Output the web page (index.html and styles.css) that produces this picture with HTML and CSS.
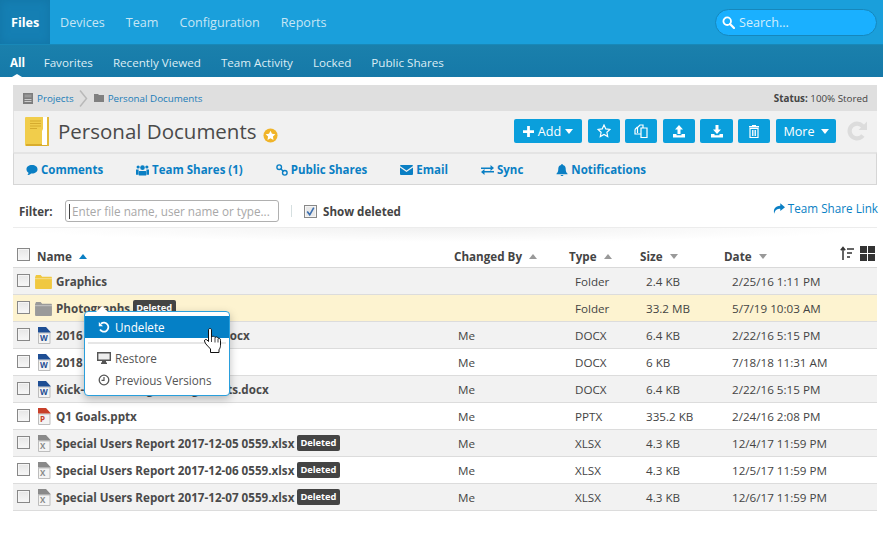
FILE: index.html
```html
<!DOCTYPE html>
<html lang="en">
<head>
<meta charset="utf-8">
<title>Personal Documents</title>
<link rel="stylesheet" href="styles.css">
</head>
<body>
<svg class="defs" width="0" height="0" aria-hidden="true">
  <defs>
    <symbol id="folder" viewBox="0 0 18 16"><path d="M0 3.500 1 1h5l1.500 2H17.500l.5 1v11l-.5 1H.5L0 15z" fill="currentColor"/><path d="M0 5h18" stroke="#fff" stroke-opacity=".45" stroke-width="1"/></symbol>
    <symbol id="doc" viewBox="0 0 14 17"><path d="M1.500 6h11.500v10.500H1.500z" fill="#f4f4f4" stroke="#bdbdbd"/><path d="M1 0h8l5 5.500H1z" fill="currentColor"/></symbol>
    <symbol id="down" viewBox="0 0 8 5"><path d="M0 0h8L4 5z" fill="currentColor"/></symbol>
    <symbol id="up" viewBox="0 0 8 5"><path d="M0 5h8L4 0z" fill="currentColor"/></symbol>
  </defs>
</svg>

<header class="topnav">
  <nav class="topnav-links">
    <a class="topnav-link active">Files</a>
    <a class="topnav-link">Devices</a>
    <a class="topnav-link">Team</a>
    <a class="topnav-link">Configuration</a>
    <a class="topnav-link">Reports</a>
  </nav>
  <div class="search">
    <svg class="search-icon" viewBox="0 0 13 13"><circle cx="5.200" cy="5.200" r="3.800" fill="none" stroke="#fff" stroke-width="1.800"/><path d="m8 8 4 4" stroke="#fff" stroke-width="2.200" stroke-linecap="round"/></svg>
    <span>Search...</span>
  </div>
</header>

<nav class="subnav">
  <a class="subnav-link active">All</a>
  <a class="subnav-link">Favorites</a>
  <a class="subnav-link">Recently Viewed</a>
  <a class="subnav-link">Team Activity</a>
  <a class="subnav-link">Locked</a>
  <a class="subnav-link">Public Shares</a>
</nav>

<main class="content">
  <section class="panel">
    <div class="crumbs">
      <svg class="crumb-icon" viewBox="0 0 10 11"><path d="M0 0h10v11H0z" fill="#7d7d7d"/><path d="M1.500 1.500h7v3h-7z" fill="#999"/><path d="M1.500 6h7v1h-7zM1.500 8h7v1h-7z" fill="#ccc"/></svg>
      <a class="crumb">Projects</a>
      <svg class="crumb-sep" viewBox="0 0 9 17"><path d="m1 .5 6.500 8L1 16.500" fill="none" stroke="#b9b9b9" stroke-width="1.500"/></svg>
      <svg class="crumb-folder" viewBox="0 0 10 8"><path d="M0 0h4l1 1h5v7H0z" fill="#808080"/></svg>
      <a class="crumb">Personal Documents</a>
      <span class="status"><b>Status:</b> 100% Stored</span>
    </div>

    <div class="titlebar">
      <svg class="title-icon" viewBox="0 0 24 29"><path d="M1 0h23v29H1a1 1 0 0 1-1-1V1a1 1 0 0 1 1-1z" fill="#f1cd4b"/><path d="M1 27h23v2H1z" fill="#d9ac2c"/><path d="M18 0h4v28h-5V14l1-2z" fill="#fff"/><path d="M22 0h2v29h-2z" fill="#e2b93a"/><path d="M5 4h11M5 6.500h11M5 9h11M5 11.500h7" stroke="#d5ab2e" stroke-width="1"/></svg>
      <h1 class="title">Personal Documents</h1>
      <svg class="title-star" viewBox="0 0 16 16"><circle cx="8" cy="8" r="7.500" fill="#f0b429"/><path d="m8 2.800 1.600 3.300 3.600.5-2.600 2.500.6 3.600L8 11l-3.200 1.700.6-3.600-2.600-2.500 3.600-.5z" fill="#fff"/></svg>
      <div class="actions">
        <a class="btn wide-add">
          <svg class="btn-plus" viewBox="0 0 12 12"><path d="M4.500 0h3v4.500H12v3H7.500V12h-3V7.500H0v-3h4.500z" fill="#fff"/></svg>
          Add
          <svg class="btn-caret"><use href="#down"/></svg>
        </a>
        <a class="btn square">
          <svg class="btn-icon" viewBox="0 0 14 14"><path d="m7 1 1.800 3.900 4.200.5-3.100 2.900.8 4.200L7 10.400l-3.700 2.100.8-4.200L1 5.400l4.200-.5z" fill="none" stroke="#fff" stroke-width="1.200"/></svg>
        </a>
        <a class="btn square wider-gap">
          <svg class="btn-icon" viewBox="0 0 14 14"><path d="M3.500 9V3.500L6 1h3v3" fill="none" stroke="#fff" stroke-width="1.200"/><path d="M1 5.500 3.500 3M7 4h6v9.500H7zM1 5.500V10h6" fill="none" stroke="#fff" stroke-width="1.200"/></svg>
        </a>
        <a class="btn square">
          <svg class="btn-icon" viewBox="0 0 14 14"><path d="M7 1 11 5.500H8.500V10h-3V5.500H3z" fill="#fff"/><path d="M1 10h3.500v1.200h5V10H13v3.500H1z" fill="#fff"/></svg>
        </a>
        <a class="btn square-lg">
          <svg class="btn-icon" viewBox="0 0 14 14"><path d="M5.500 1h3v4.500H11L7 10 3 5.500h2.500z" fill="#fff"/><path d="M1 10h3.500v1.200h5V10H13v3.500H1z" fill="#fff"/></svg>
        </a>
        <a class="btn square wider-gap">
          <svg class="btn-icon" viewBox="0 0 14 14"><path d="M5 1h4v1h3v1.500H2V2h3z" fill="#fff"/><path d="M3 4.500h8V13.500H3z" fill="none" stroke="#fff" stroke-width="1.200"/><path d="M5.500 6v6M7 6v6M8.500 6v6" stroke="#fff" stroke-width=".9"/></svg>
        </a>
        <a class="btn more">
          More
          <svg class="btn-caret"><use href="#down"/></svg>
        </a>
        <svg class="refresh" viewBox="0 0 22 22"><path d="M11 1.500a9.500 9.500 0 1 0 7.500 15.300l-3.300-2.500A5.300 5.300 0 1 1 15 7.500l-2.500 2.500H21V1.500l-3 3A9.500 9.500 0 0 0 11 1.500z" fill="#dcdcdc"/></svg>
      </div>
    </div>

    <div class="tabs">
      <a class="tab"><svg class="tab-icon" viewBox="0 0 13 12"><path d="M6.500 0.500c3.500 0 6 2 6 4.700s-2.500 4.700-6 4.700l-1-.1C4.300 11 2.800 11.500 1.500 11.500c.8-.8 1.200-1.600 1.200-2.500C1.300 8.200.5 6.800.5 5.200.5 2.500 3 .5 6.500.5z" fill="currentColor"/></svg>Comments</a>
      <a class="tab"><svg class="tab-icon team-icon" viewBox="0 0 14 12"><circle cx="7" cy="3.500" r="2.500" fill="currentColor"/><circle cx="2.300" cy="2.800" r="1.700" fill="currentColor"/><circle cx="11.700" cy="2.800" r="1.700" fill="currentColor"/><path d="M3.500 7h7l.5 1v4H3V8z" fill="currentColor"/><path d="M0 5.500h2.800V11H0zM11.200 5.500H14V11h-2.800z" fill="currentColor"/></svg>Team Shares (1)</a>
      <a class="tab"><svg class="tab-icon" viewBox="0 0 12 12"><circle cx="3.200" cy="3.200" r="2.300" fill="none" stroke="currentColor" stroke-width="1.400"/><circle cx="8.800" cy="8.800" r="2.300" fill="none" stroke="currentColor" stroke-width="1.400"/><path d="m4.500 4.500 3 3" stroke="currentColor" stroke-width="1.400"/></svg>Public Shares</a>
      <a class="tab"><svg class="tab-icon email-icon" viewBox="0 0 13 10"><path d="M1 0h11a1 1 0 0 1 1 1L6.500 5.500 0 1a1 1 0 0 1 1-1zM0 2.600l6.500 4.500L13 2.600V9a1 1 0 0 1-1 1H1a1 1 0 0 1-1-1z" fill="currentColor"/></svg>Email</a>
      <a class="tab"><svg class="tab-icon email-icon" viewBox="0 0 13 10"><path d="M0 2.400h9.500V0L13 3l-3.500 3V3.900H0zM13 6.100H3.500V4L0 7l3.500 3V7.600H13z" fill="currentColor"/></svg>Sync</a>
      <a class="tab"><svg class="tab-icon" viewBox="0 0 12 13"><path d="M6 0c.6 0 1 .4 1 1 2 .4 3 2 3 4 0 3 .6 4.500 2 5.500V11H0v-.5C1.400 9.500 2 8 2 5c0-2 1-3.600 3-4 0-.6.400-1 1-1zM4.500 11.800h3C7.500 12.600 6.800 13 6 13s-1.500-.4-1.500-1.200z" fill="currentColor"/></svg>Notifications</a>
    </div>
  </section>

  <section class="filterbar">
    <span class="filter-label">Filter:</span>
    <div class="filter-input"><span class="caret-line"></span>Enter file name, user name or type...</div>
    <span class="divider"></span>
    <span class="checkbox checked"><svg viewBox="0 0 10 10"><path d="m2 5 2.300 3L8 1.500" fill="none" stroke="#3c6fb0" stroke-width="1.500"/></svg></span>
    <span class="show-deleted">Show deleted</span>
    <a class="share-link"><svg class="share-icon" viewBox="0 0 14 12"><path d="M8.500 0 14 4.500 8.500 9V6.300C5 6.300 2.500 7.300 1.500 12 0 7 2.500 2.800 8.500 2.700z" fill="currentColor"/></svg>Team Share Link</a>
  </section>
  <div class="fade"></div>

  <section class="list">
    <div class="list-head">
      <span class="checkbox"></span>
      <span class="h-name">Name <svg class="sort blue"><use href="#up"/></svg></span>
      <span class="h-by">Changed By <svg class="sort"><use href="#up"/></svg></span>
      <span class="h-type">Type <svg class="sort"><use href="#up"/></svg></span>
      <span class="h-size">Size <svg class="sort"><use href="#down"/></svg></span>
      <span class="h-date">Date <svg class="sort"><use href="#down"/></svg></span>
      <span class="view-tools">
        <svg class="sort-tool" viewBox="0 0 14 14"><path d="M3 14V2M.8 4.200 3 1.500l2.200 2.700" fill="none" stroke="#333" stroke-width="1.500"/><path d="M7 3h7M7 7h5M7 11h3" stroke="#333" stroke-width="1.600"/></svg>
        <svg class="grid-tool" viewBox="0 0 15 15"><path d="M0 0h7v7H0zM8 0h7v7H8zM0 8h7v7H0zM8 8h7v7H8z" fill="#333"/></svg>
      </span>
    </div>

    <div class="row odd">
      <span class="checkbox"></span><svg class="file-icon folder-y"><use href="#folder"/></svg>
      <span class="name">Graphics</span><span class="by"></span><span class="type">Folder</span><span class="size">2.4 KB</span><span class="date">2/25/16 1:11 PM</span>
    </div>
    <div class="row selected">
      <span class="checkbox"></span><svg class="file-icon folder-g"><use href="#folder"/></svg>
      <span class="name">Photographs<em class="badge">Deleted</em></span><span class="by"></span><span class="type">Folder</span><span class="size">33.2 MB</span><span class="date">5/7/19 10:03 AM</span>
    </div>
    <div class="row odd">
      <span class="checkbox"></span><span class="doc-wrap word"><svg class="doc-icon"><use href="#doc"/></svg><i>W</i></span>
      <span class="name">2016 Marketing Plan Review.docx</span><span class="by">Me</span><span class="type">DOCX</span><span class="size">6.4 KB</span><span class="date">2/22/16 5:15 PM</span>
    </div>
    <div class="row">
      <span class="checkbox"></span><span class="doc-wrap word"><svg class="doc-icon"><use href="#doc"/></svg><i>W</i></span>
      <span class="name">2018 Marketing Plan.docx</span><span class="by">Me</span><span class="type">DOCX</span><span class="size">6 KB</span><span class="date">7/18/18 11:31 AM</span>
    </div>
    <div class="row odd">
      <span class="checkbox"></span><span class="doc-wrap word"><svg class="doc-icon"><use href="#doc"/></svg><i>W</i></span>
      <span class="name">Kick-Off Meeting Talking Points.docx</span><span class="by">Me</span><span class="type">DOCX</span><span class="size">6.4 KB</span><span class="date">2/22/16 5:15 PM</span>
    </div>
    <div class="row">
      <span class="checkbox"></span><span class="doc-wrap ppt"><svg class="doc-icon"><use href="#doc"/></svg><i>P</i></span>
      <span class="name">Q1 Goals.pptx</span><span class="by">Me</span><span class="type">PPTX</span><span class="size">335.2 KB</span><span class="date">2/24/16 2:08 PM</span>
    </div>
    <div class="row odd">
      <span class="checkbox"></span><span class="doc-wrap xls"><svg class="doc-icon"><use href="#doc"/></svg><i>X</i></span>
      <span class="name">Special Users Report 2017-12-05 0559.xlsx<em class="badge">Deleted</em></span><span class="by">Me</span><span class="type">XLSX</span><span class="size">4.3 KB</span><span class="date">12/4/17 11:59 PM</span>
    </div>
    <div class="row">
      <span class="checkbox"></span><span class="doc-wrap xls"><svg class="doc-icon"><use href="#doc"/></svg><i>X</i></span>
      <span class="name">Special Users Report 2017-12-06 0559.xlsx<em class="badge">Deleted</em></span><span class="by">Me</span><span class="type">XLSX</span><span class="size">4.3 KB</span><span class="date">12/5/17 11:59 PM</span>
    </div>
    <div class="row odd">
      <span class="checkbox"></span><span class="doc-wrap xls"><svg class="doc-icon"><use href="#doc"/></svg><i>X</i></span>
      <span class="name">Special Users Report 2017-12-07 0559.xlsx<em class="badge">Deleted</em></span><span class="by">Me</span><span class="type">XLSX</span><span class="size">4.3 KB</span><span class="date">12/6/17 11:59 PM</span>
    </div>

    <div class="menu">
      <span class="menu-arrow"></span>
      <a class="menu-item hot">
        <svg class="menu-icon" viewBox="0 0 12 12"><path d="M3 2.700A4.500 4.500 0 1 1 2 8.500" fill="none" stroke="#fff" stroke-width="1.800"/><path d="M.8 1v4.200H5z" fill="#fff"/></svg>
        Undelete
      </a>
      <div class="menu-sep"></div>
      <a class="menu-item">
        <svg class="menu-icon monitor" viewBox="0 0 14 12"><path d="M.7.700h12.600v7.600H.7z" fill="#eee" stroke="#555" stroke-width="1.400"/><path d="M5 9h4v1.500h1V12H4v-1.500h1z" fill="#555"/></svg>
        Restore
      </a>
      <a class="menu-item">
        <svg class="menu-icon" viewBox="0 0 12 12"><circle cx="6" cy="6" r="4.800" fill="none" stroke="#555" stroke-width="1.300"/><path d="M6 3v3.300H3.500" fill="none" stroke="#555" stroke-width="1.200"/></svg>
        Previous Versions
      </a>
    </div>
    <svg class="hand" viewBox="0 0 17 25"><path d="M4.500 2c0-2 3-2 3 0v7c1-1 3-1 3.500.5 1-1 2.800-.7 3 .8 1.300-.5 2.500.3 2.500 2v5c0 2-.6 3-1.500 4.500v2.700H6.500V21C4 18 1 16 .5 13c-.2-1.500 1.500-2 2.500-1l1.500 1.500z" fill="#fff" stroke="#111" stroke-width="1"/><path d="M7.500 9v5M11 10v4.500M14 11v3.500" stroke="#111" stroke-width=".8"/></svg>
  </section>
</main>
</body>
</html>
```

FILE: styles.css
```css
* { box-sizing: border-box; }
html, body { margin: 0; padding: 0; }
body {
  width: 883px;
  height: 537px;
  overflow: hidden;
  background: #fff;
  font-family: "Open Sans", "Liberation Sans", sans-serif;
  font-size: 11.650px;
  color: #444;
  position: relative;
}
a { text-decoration: none; cursor: default; }
.defs { position: absolute; }

.topnav {
  height: 45px;
  background: #1a9fdb;
  display: flex;
  align-items: flex-start;
  justify-content: space-between;
  border-bottom: 1px solid #1888b8;
}
.topnav-links { display: flex; }
.topnav-link {
  height: 44px;
  line-height: 46px;
  font-size: 12.600px;
  color: #c7e6f5;
  padding: 0 10.500px;
}
.topnav-link.active {
  width: 49.500px;
  padding: 0 0 0 11px;
  font-weight: 700;
  color: #fff;
  background: #157fb3;
  box-shadow: inset 0 0 10px #1275a6;
}
.search {
  width: 162px;
  height: 27px;
  margin: 9px 6px 0 0;
  border: 1px solid #1687bc;
  border-radius: 14px;
  background: #1ab0ff;
  color: #d4eefc;
  font-size: 12.600px;
  display: flex;
  align-items: center;
  padding-left: 6px;
  gap: 4px;
}
.search-icon { width: 13px; height: 13px; flex: none; }

.subnav {
  height: 32px;
  background: linear-gradient(#1a80ac, #1679a8);
  display: flex;
  align-items: center;
  padding: 2px 0 0 10px;
  gap: 20px;
}
.subnav-link { color: #dcedf5; font-size: 11.650px; }
.subnav-link.active { color: #fff; font-weight: 700; position: relative; margin-right: -1.500px; }
.subnav-link.active::after {
  content: "";
  position: absolute;
  left: 2px;
  bottom: -7px;
  border: 5px solid transparent;
  border-top: 0;
  border-bottom: 3px solid #fff;
}

.content { padding: 8px 6px 0 13px; position: relative; }

.panel { width: 864px; }
.crumbs {
  height: 26px;
  background: #dfdfdf;
  display: flex;
  align-items: center;
  padding: 0 9px 0 10px;
  font-size: 9.800px;
}
.crumb { color: #1b7cb8; }
.crumb-icon { width: 10px; height: 11px; margin-right: 4px; }
.crumb-sep { width: 9px; height: 17px; margin: 0 6px 0 5px; }
.crumb-folder { width: 10px; height: 8px; margin-right: 4px; }
.status { margin-left: auto; color: #444; font-size: 9.800px; }
.status b { font-weight: 700; }

.titlebar {
  height: 41px;
  background: #f1f1f1;
  display: flex;
  align-items: center;
  padding-left: 11px;
  border-left: 1px solid #e2e2e2;
}
.title-icon { width: 24px; height: 29px; flex: none; }
.title {
  margin: 0 0 0 9px;
  font-size: 20.500px;
  font-weight: 400;
  color: #4a4a4a;
  line-height: 41px;
}
.title-star { width: 15px; height: 15px; margin: 7px 0 0 6px; flex: none; }
.actions { margin-left: auto; display: flex; align-items: center; gap: 5px; padding: 0 9px 1px 0; }
.btn {
  height: 24px;
  background: #0a9fdc;
  border-radius: 2px;
  color: #fff;
  font-size: 12.600px;
  display: flex;
  align-items: center;
  justify-content: center;
}
.wide-add { width: 68px; margin-right: 1px; gap: 4px; }
.square { width: 32px; }
.square-lg { width: 33px; }
.wider-gap { margin-right: 1px; }
.more { width: 60px; gap: 6px; }
.btn-plus { width: 11px; height: 11px; }
.btn-caret { width: 8px; height: 5px; color: #fff; }
.btn-icon { width: 14px; height: 14px; }
.refresh { width: 22px; height: 22px; margin-left: 5px; }

.tabs {
  height: 33px;
  background: #f1f1f1;
  border: 1px solid #d6d6d6;
  border-top: 2px solid #e4e4e4;
  display: flex;
  align-items: center;
  padding: 1px 0 0 12px;
  gap: 33px;
  font-weight: 700;
  font-size: 11.500px;
}
.tab { color: #0a7fc4; display: flex; align-items: center; gap: 3px; }
.tab-icon { width: 12px; height: 12px; flex: none; }
.team-icon { width: 13px; }
.email-icon { width: 13px; height: 10px; }

.filterbar {
  width: 864px;
  height: 43px;
  display: flex;
  align-items: center;
  padding: 10px 0 0 6px;
  border-bottom: 1px solid #ececec;
}
.filter-label { font-weight: 700; color: #444; font-size: 11.500px; width: 46px; }
.filter-input {
  width: 214px;
  height: 22px;
  border: 1px solid #b0b0b0;
  border-radius: 3px;
  font-size: 11.700px;
  color: #a8a8a8;
  display: flex;
  align-items: center;
  padding-left: 3px;
  white-space: nowrap;
  overflow: hidden;
}
.caret-line { width: 1px; height: 15px; background: #444; margin-right: 2px; flex: none; }
.divider { width: 1px; height: 12px; background: #d5dfe0; margin: 0 12px 0 12px; }
.show-deleted { font-weight: 700; margin-left: 6px; color: #444; font-size: 11.600px; }
.share-link { margin-left: auto; color: #0a7fc4; font-size: 11.700px; display: flex; align-items: center; gap: 3px; padding: 0 0 6px; margin-right: -1px; }
.share-icon { width: 12px; height: 11px; }

.fade {
  width: 864px;
  height: 14px;
  background: radial-gradient(ellipse 50% 100% at 50% 0, #f1f1f1, #fff);
}

.checkbox {
  width: 13px;
  height: 13px;
  border: 1px solid #888;
  background: linear-gradient(#e6e6e6, #f7f7f7);
  box-shadow: inset 0 0 0 1px #f5f5f5;
  flex: none;
  display: block;
}
.checkbox.checked { background: #e8e8e8; }
.checkbox.checked svg { display: block; width: 11px; height: 11px; }

.list { width: 864px; position: relative; }
.list-head {
  height: 26px;
  display: grid;
  grid-template-columns: 20px 417px 115px 71px 84px 1fr auto;
  align-items: center;
  padding: 3px 2px 0 4px;
  border-bottom: 1px solid #d9d9d9;
  font-weight: 700;
  color: #444;
}
.list-head .checkbox { margin-top: -3px; }
.sort { width: 8px; height: 5px; color: #999; margin: 0 0 2px 4px; }
.sort.blue { color: #0a7fc4; }
.view-tools { display: flex; gap: 6px; align-items: center; margin-top: -6px; }
.sort-tool { width: 14px; height: 14px; }
.grid-tool { width: 15px; height: 15px; }

.row {
  height: 27px;
  display: grid;
  grid-template-columns: 18px 21px 402px 117px 71px 86px 1fr;
  align-items: center;
  padding: 0 0 0 4px;
  border-bottom: 1px solid #dcdcdc;
  background: #fff;
}
.row.odd { background: #f2f2f2; }
.row.selected { background: #fdf3d0; }
.row > .checkbox { margin-bottom: 1px; }
.name { font-weight: 700; color: #4a4a4a; display: flex; align-items: center; white-space: nowrap; }
.badge {
  font-style: normal;
  font-size: 9.300px;
  font-weight: 700;
  color: #fff;
  background: #444;
  border-radius: 2px;
  padding: 0 3.500px;
  height: 16px;
  line-height: 16px;
  margin-left: 2.500px;
}
.file-icon { width: 17px; height: 15px; }
.folder-y { color: #f0c840; }
.folder-g { color: #9a9a9a; }
.doc-wrap { position: relative; width: 14px; height: 17px; display: block; margin-left: 2px; }
.doc-icon { width: 14px; height: 17px; display: block; }
.doc-wrap i {
  position: absolute;
  left: 3px;
  top: 6px;
  font-style: normal;
  font-weight: 700;
  font-size: 8px;
  line-height: 10px;
}
.word { color: #1e4e94; }
.ppt { color: #c8402a; }
.xls { color: #8a8a8a; }

.menu {
  position: absolute;
  left: 71px;
  top: 69px;
  width: 146px;
  height: 85px;
  background: #fff;
  border: 1px solid #2a9fdc;
  border-radius: 4px;
  box-shadow: 0 3px 8px rgba(0, 0, 0, .25);
  padding-top: 4px;
  font-size: 11.700px;
  color: #555;
}
.menu-arrow {
  position: absolute;
  left: 11px;
  top: -6px;
  border: 6px solid transparent;
  border-top: 0;
  border-bottom: 6px solid #fff;
}
.menu-item { height: 22px; display: flex; align-items: center; padding-left: 13px; gap: 5px; }
.menu-item.hot { background: #0580c6; color: #fff; }
.menu-sep { height: 2px; background: #e6e6e6; margin: 4px 3px 3px; }
.menu-icon { width: 12px; height: 12px; flex: none; }
.menu-icon.monitor { width: 14px; margin: 0 -1px 0 -1px; }
.hand { position: absolute; left: 191px; top: 86px; width: 17px; height: 25px; }
```
